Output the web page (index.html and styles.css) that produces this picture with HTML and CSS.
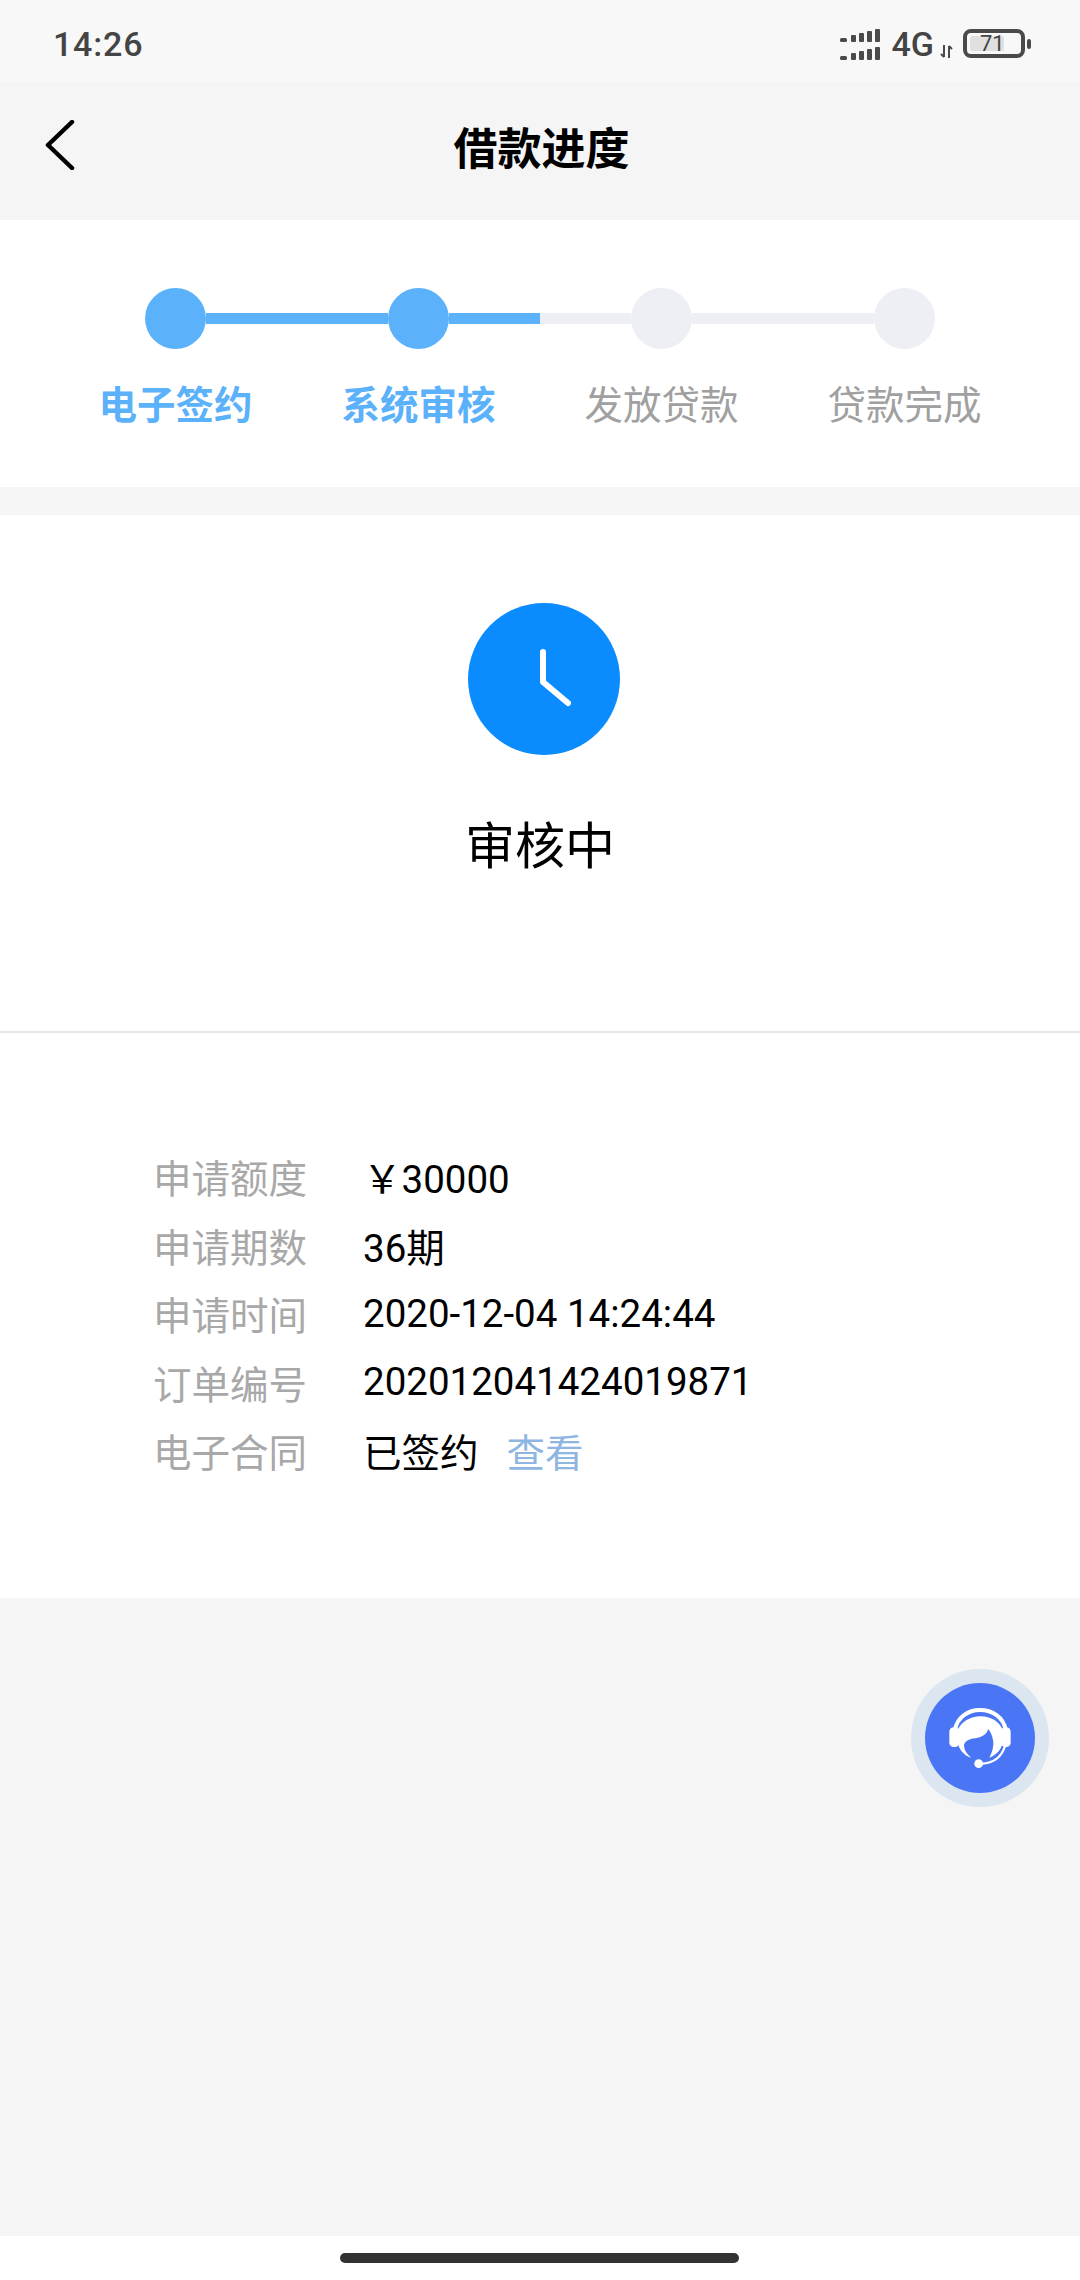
FILE: index.html
```html
<!DOCTYPE html>
<html lang="zh-CN">
<head>
    <meta charset="UTF-8">
    <title>借款进度</title>
    <link rel="stylesheet" href="styles.css">
</head>
<body>
<div class="page">

    <div class="status-bar">
        <span class="status-time">14:26</span>
        <div class="status-icons">
            <svg class="signal" width="40" height="31" viewBox="0 0 40 31">
                <rect x="0" y="9" width="7" height="4" rx="1.5"/>
                <rect x="11" y="6" width="5" height="7" rx="1"/>
                <rect x="19" y="4" width="5" height="9" rx="1"/>
                <rect x="27" y="2" width="5" height="11" rx="1"/>
                <rect x="35" y="0" width="5" height="13" rx="1"/>
                <rect x="0" y="27" width="7" height="4" rx="1.5"/>
                <rect x="11" y="24" width="5" height="7" rx="1"/>
                <rect x="19" y="22" width="5" height="9" rx="1"/>
                <rect x="27" y="20" width="5" height="11" rx="1"/>
                <rect x="35" y="18" width="5" height="13" rx="1"/>
            </svg>
            <span class="status-net">4G</span>
            <svg class="updown" width="13" height="13" viewBox="0 0 13 13">
                <path d="M4 0V12M1 9L4 12M9 13V1M9 1L12 4"/>
            </svg>
            <div class="battery"><div class="battery-fill"></div><span class="battery-num">71</span></div>
            <div class="battery-nub"></div>
        </div>
    </div>

    <div class="nav-bar">
        <svg class="back" width="30" height="50" viewBox="0 0 30 50">
            <path d="M27 2L3 25L27 48"/>
        </svg>
        <h1>借款进度</h1>
    </div>

    <div class="steps">
        <div class="track">
            <div class="dot on"></div>
            <div class="seg wide on"></div>
            <div class="dot on"></div>
            <div class="seg on"></div>
            <div class="seg"></div>
            <div class="dot"></div>
            <div class="seg wide"></div>
            <div class="dot"></div>
        </div>
        <div class="step-labels">
            <span class="on">电子签约</span>
            <span class="on">系统审核</span>
            <span>发放贷款</span>
            <span>贷款完成</span>
        </div>
    </div>

    <div class="result">
        <svg class="clock" width="152" height="152" viewBox="0 0 152 152">
            <circle cx="76" cy="76" r="76" fill="#0a8cff"/>
            <path d="M75 49V79L100 100" fill="none" stroke="#fff" stroke-width="6" stroke-linecap="round" stroke-linejoin="round"/>
        </svg>
        <div class="result-text">审核中</div>
    </div>

    <div class="details">
        <div class="row"><span class="key">申请额度</span><span class="val">￥30000</span></div>
        <div class="row"><span class="key">申请期数</span><span class="val">36期</span></div>
        <div class="row"><span class="key">申请时间</span><span class="val">2020-12-04 14:24:44</span></div>
        <div class="row"><span class="key">订单编号</span><span class="val">202012041424019871</span></div>
        <div class="row"><span class="key">电子合同</span><span class="val">已签约<a class="view">查看</a></span></div>
    </div>

    <div class="home-bar"><div class="home-pill"></div></div>

    <div class="fab">
        <div class="fab-inner">
            <svg width="110" height="110" viewBox="75 70 330 330">
                <path class="hs-band" d="M165 210C172 172 205 151 240 151C277 151 310 172 317 210"/>
                <path class="hs-fill" d="M172 215C182 186 212 170 242 170C272 170 300 186 310 215L310 240C306 268 292 284 268 294C278 276 282 256 279 241C277 227 271 217 265 208C261 223 245 233 226 236C206 238 194 246 192 256C192 271 200 283 214 294C190 287 174 266 172 240Z"/>
                <rect class="hs-fill" x="148" y="203" width="30" height="59" rx="13"/>
                <rect class="hs-fill" x="303" y="203" width="29" height="59" rx="13"/>
                <path class="hs-band thin" d="M314 262C304 292 280 310 245 312"/>
                <circle class="hs-fill" cx="236" cy="312" r="13"/>
            </svg>
        </div>
    </div>

</div>
</body>
</html>
```

FILE: styles.css
```css
* {
    box-sizing: border-box;
}

body {
    margin: 0;
    font-family: "Noto Sans CJK SC", sans-serif;
}

.page {
    position: relative;
    width: 1080px;
    height: 2280px;
    overflow: hidden;
    display: flex;
    flex-direction: column;
    background-color: #f5f5f5;
}

/* status bar */
.status-bar {
    height: 82px;
    flex: none;
    display: flex;
    justify-content: space-between;
    align-items: flex-start;
    padding: 0 49px 0 53px;
    background-color: #f8f8f8;
    color: #444;
    font-family: Roboto, sans-serif;
}

.status-time {
    font-size: 34px;
    font-weight: 500;
    line-height: 40px;
    letter-spacing: 0.8px;
    margin-top: 24px;
}

.status-icons {
    display: flex;
    align-items: flex-start;
    padding-top: 29px;
}

.signal rect {
    fill: #4a4a4a;
}

.status-net {
    font-size: 34px;
    font-weight: 500;
    line-height: 40px;
    margin: -5px 2px 0 12px;
}

.updown {
    margin: 16px 0 0 4px;
}

.updown path {
    fill: none;
    stroke: #4a4a4a;
    stroke-width: 2;
}

.battery {
    position: relative;
    width: 62px;
    height: 29px;
    margin-left: 10px;
    padding: 3px;
    border: 4px solid #4a4a4a;
    border-radius: 8px;
}

.battery-fill {
    width: 34px;
    height: 100%;
    background-color: #e0e0e0;
    border-radius: 2px;
}

.battery-num {
    position: absolute;
    left: 13px;
    top: -1px;
    font-size: 22px;
    line-height: 23px;
    font-weight: 400;
}

.battery-nub {
    width: 4px;
    height: 10px;
    margin: 10px 0 0 2px;
    border-radius: 2px;
    background-color: #4a4a4a;
}

/* title bar */
.nav-bar {
    position: relative;
    height: 138px;
    flex: none;
    display: flex;
    justify-content: center;
    align-items: center;
    padding-bottom: 10px;
}

.nav-bar h1 {
    margin: 0 0 0 3px;
    font-size: 44px;
    font-weight: 700;
    line-height: 60px;
    color: #000;
}

.back {
    position: absolute;
    left: 45px;
    top: 38px;
}

.back path {
    fill: none;
    stroke: #000;
    stroke-width: 4.5;
    stroke-linecap: round;
    stroke-linejoin: round;
}

/* progress steps */
.steps {
    height: 267px;
    flex: none;
    padding-top: 68px;
    background-color: #fff;
}

.track {
    display: flex;
    align-items: center;
    margin: 0 145px;
}

.dot {
    width: 61px;
    height: 61px;
    flex: none;
    border-radius: 50%;
    background-color: #eeeff4;
}

.dot.on {
    background-color: #5cb1fb;
}

.seg {
    flex: 1;
    height: 11px;
    background-color: #eeeff4;
}

.seg.on {
    background-color: #5cb1fb;
}

.seg.wide {
    flex: 2;
}

.step-labels {
    display: grid;
    grid-template-columns: repeat(4, 243px);
    margin: 28px 0 0 54px;
    font-size: 38.5px;
    line-height: 50px;
    text-align: center;
    color: #a0a0a0;
}

.step-labels .on {
    color: #5cb1fb;
    font-weight: 700;
}

/* status result */
.result {
    height: 518px;
    flex: none;
    margin-top: 28px;
    padding-top: 88px;
    text-align: center;
    background-color: #fff;
    border-bottom: 2px solid #e6e6e6;
}

.clock {
    display: block;
    margin: 0 auto 0 468px;
}

.result-text {
    margin-top: 57px;
    font-size: 50px;
    line-height: 60px;
    color: #000;
}

/* detail rows */
.details {
    height: 565px;
    flex: none;
    padding: 109px 0 0 153px;
    background-color: #fff;
}

.row {
    display: grid;
    grid-template-columns: 210px auto;
    height: 68.5px;
    align-items: center;
    font-size: 38.5px;
}

.key {
    color: #a8a8a8;
}

.val {
    color: #000;
    font-family: Roboto, "Noto Sans CJK SC", sans-serif;
}

.view {
    margin-left: 28px;
    color: #8fb6e2;
}

/* home indicator */
.home-bar {
    height: 44px;
    margin-top: auto;
    flex: none;
    padding-top: 17px;
    background-color: #fff;
}

.home-pill {
    width: 399px;
    height: 10px;
    margin-left: 340px;
    border-radius: 5px;
    background-color: #333;
}

/* floating service button */
.fab {
    position: absolute;
    left: 911px;
    top: 1669px;
    width: 138px;
    height: 138px;
    padding: 14px;
    border-radius: 50%;
    background-color: #dbe6f1;
}

.fab-inner {
    width: 110px;
    height: 110px;
    border-radius: 50%;
    background-color: #4a76f6;
}

.fab-inner svg {
    display: block;
}

.hs-fill {
    fill: #fff;
}

.hs-band {
    fill: none;
    stroke: #fff;
    stroke-width: 12;
    stroke-linecap: round;
}

.hs-band.thin {
    stroke-width: 7;
}
```
